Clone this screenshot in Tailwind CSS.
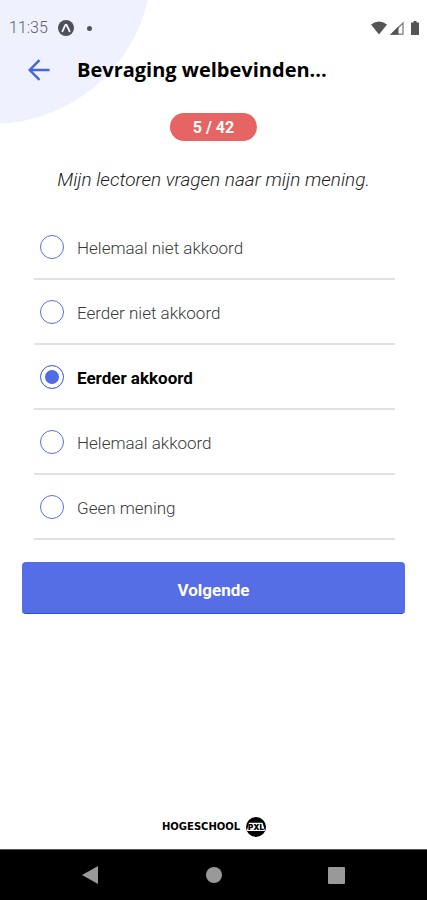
<!DOCTYPE html>
<html lang="nl">
<head>
<meta charset="utf-8">
<meta name="viewport" content="width=device-width, initial-scale=1">
<title>Bevraging welbevinden</title>
<script src="https://cdn.jsdelivr.net/npm/@tailwindcss/browser@4"></script>
</head>
<body class="bg-white font-[Roboto,'Liberation_Sans',sans-serif] text-black">
<div class="relative isolate flex min-h-screen flex-col overflow-hidden">
  <div class="absolute -left-[168px] -top-[196px] -z-10 size-80 rounded-full bg-[#eff1fe]"></div>

  <div class="flex h-12 items-center pl-[9px] pr-2 pt-2 text-[#606167]">
    <span class="text-base font-light">11:35</span>
    <svg class="ml-2.5 size-4" viewBox="0 0 16 16" aria-hidden="true"><circle cx="8" cy="8" r="8" fill="#505158"/><path d="M4.4 11.3 7.2 5.3Q8 4 8.8 5.3l2.8 6" fill="none" stroke="#f3f4fc" stroke-width="1.8" stroke-linecap="round"/></svg>
    <span class="ml-[13px] size-[5px] rounded-full bg-[#505158]"></span>
    <div class="ml-auto flex items-center gap-[3px]">
      <svg class="h-[14px] w-4" viewBox="0 0 16 14" aria-hidden="true"><path d="M0 3.5Q8-2.5 16 3.5L8 13.5z" fill="#555"/></svg>
      <svg class="size-[14px]" viewBox="0 0 14 14" aria-hidden="true"><path d="M1.8 13.2 13 2v11.2z" fill="#fff" stroke="#777" stroke-width="1.2"/><path d="M0 13.7 8.5 5.3v8.4z" fill="#555"/></svg>
      <svg class="ml-1 h-[14px] w-2" viewBox="0 0 8 14" aria-hidden="true"><path d="M2.5 0h3v1.5H8V14H0V1.5h2.5z" fill="#555"/></svg>
    </div>
  </div>

  <header class="flex h-11 items-center pl-7">
    <button type="button" aria-label="Terug" class="flex size-[22px] items-center justify-center">
      <svg class="size-[22px]" viewBox="0 0 22 22" fill="none" stroke="#4664dc" stroke-width="2.4" aria-hidden="true"><path d="M21.5 11H2M11.5 1.2 1.7 11l9.8 9.8"/></svg>
    </button>
    <h1 class="ml-[27px] font-['Open_Sans',sans-serif] text-xl font-bold">Bevraging welbevinden...</h1>
  </header>

  <main class="flex flex-col px-[22px] pt-[21px]">
    <p class="flex h-7 w-[87px] items-center justify-center self-center rounded-full bg-[#e76464] pt-0.5 text-base font-bold text-white">5 / 42</p>
    <form>
      <fieldset>
        <legend class="w-full pt-[25px] text-center text-[19px] font-light italic leading-7 text-[#222]">Mijn lectoren vragen naar mijn mening.</legend>
        <div class="ml-3 mr-2.5 mt-[21px] text-[17px] font-light text-[#3a3a3a]">
          <label class="flex h-[65px] items-center gap-[13px] border-b-2 border-[#e2e2e2] pl-1.5"><input type="radio" name="antwoord" class="size-6 appearance-none rounded-full border border-[#5670e4] checked:bg-[#506be4] checked:shadow-[inset_0_0_0_4px_white]"><span class="pt-1">Helemaal niet akkoord</span></label>
          <label class="flex h-[65px] items-center gap-[13px] border-b-2 border-[#e2e2e2] pl-1.5"><input type="radio" name="antwoord" class="size-6 appearance-none rounded-full border border-[#5670e4] checked:bg-[#506be4] checked:shadow-[inset_0_0_0_4px_white]"><span class="pt-1">Eerder niet akkoord</span></label>
          <label class="flex h-[65px] items-center gap-[13px] border-b-2 border-[#e2e2e2] pl-1.5"><input type="radio" name="antwoord" checked class="size-6 appearance-none rounded-full border border-[#5670e4] checked:bg-[#506be4] checked:shadow-[inset_0_0_0_4px_white]"><span class="pt-1 font-bold text-black">Eerder akkoord</span></label>
          <label class="flex h-[65px] items-center gap-[13px] border-b-2 border-[#e2e2e2] pl-1.5"><input type="radio" name="antwoord" class="size-6 appearance-none rounded-full border border-[#5670e4] checked:bg-[#506be4] checked:shadow-[inset_0_0_0_4px_white]"><span class="pt-1">Helemaal akkoord</span></label>
          <label class="flex h-[65px] items-center gap-[13px] border-b-2 border-[#e2e2e2] pl-1.5"><input type="radio" name="antwoord" class="size-6 appearance-none rounded-full border border-[#5670e4] checked:bg-[#506be4] checked:shadow-[inset_0_0_0_4px_white]"><span class="pt-1">Geen mening</span></label>
        </div>
      </fieldset>
      <button type="submit" class="mt-[22px] h-[52px] w-full rounded-sm border-b border-[#2f50d5] bg-[#556de5] pt-1.5 text-[17px] font-bold text-white">Volgende</button>
    </form>
  </main>

  <footer class="mt-auto flex items-center justify-center pb-3">
    <svg class="h-5 w-[104px]" viewBox="0 0 104 20" role="img" aria-label="Hogeschool PXL">
      <text x="0" y="13" font-family="DejaVu Sans, sans-serif" font-size="10" font-weight="700">HOGESCHOOL</text>
      <circle cx="94" cy="10" r="10"/>
      <path d="M87 5.8h13.5L103 14H84.800z" fill="#fff"/>
      <text x="86" y="13" font-family="Inter, sans-serif" font-size="8" font-weight="900">PXL</text>
    </svg>
  </footer>

  <nav class="grid h-[51px] grid-cols-[1fr_66px_1fr] items-center border-t border-[#555] bg-black">
    <button type="button" aria-label="Vorige" class="justify-self-center"><svg class="h-[18px] w-4" viewBox="0 0 16 18" aria-hidden="true"><path d="M0 9 16 0v18z" fill="#999"/></svg></button>
    <button type="button" aria-label="Startscherm" class="size-4 justify-self-center rounded-full bg-[#999]"></button>
    <button type="button" aria-label="Recente apps" class="size-[17px] justify-self-center rounded-[1px] bg-[#999]"></button>
  </nav>
</div>
</body>
</html>
